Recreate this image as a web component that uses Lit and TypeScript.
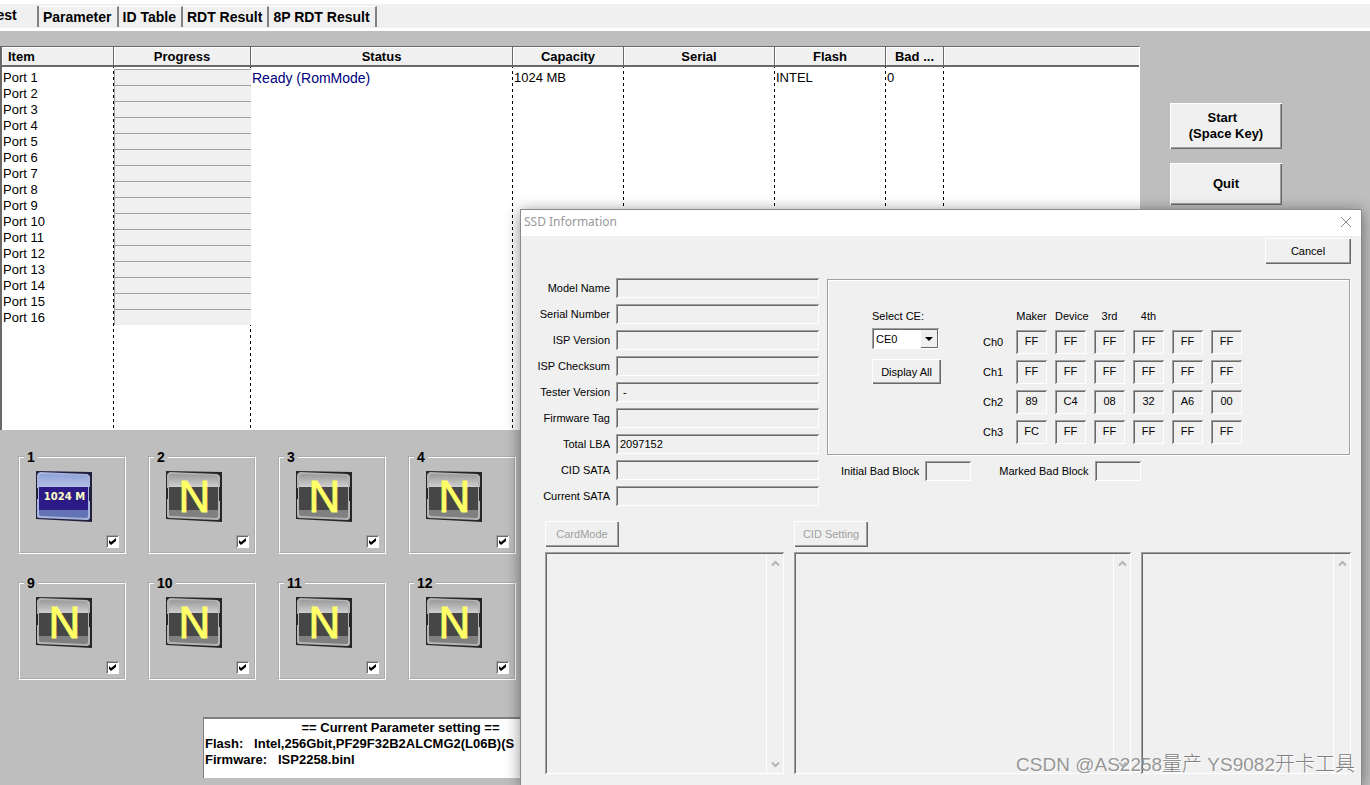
import { LitElement, html, css, svg } from "lit";
import { customElement, property } from "lit/decorators.js";

const TABS = ["Parameter", "ID Table", "RDT Result", "8P RDT Result"];

interface PortRow {
  item: string;
  status: string;
  capacity: string;
  flash: string;
  bad: string;
}

const PORTS: PortRow[] = Array.from({ length: 16 }, (_, i) => ({
  item: `Port ${i + 1}`,
  status: i === 0 ? "Ready (RomMode)" : "",
  capacity: i === 0 ? "1024 MB" : "",
  flash: i === 0 ? "INTEL" : "",
  bad: i === 0 ? "0" : "",
}));

const SLOTS = [
  { id: 1, text: "1024 M", ready: true },
  { id: 2, text: "N", ready: false },
  { id: 3, text: "N", ready: false },
  { id: 4, text: "N", ready: false },
  { id: 9, text: "N", ready: false },
  { id: 10, text: "N", ready: false },
  { id: 11, text: "N", ready: false },
  { id: 12, text: "N", ready: false },
];

const FIELDS: [string, string, string][] = [
  ["model", "Model Name", ""],
  ["serial", "Serial Number", ""],
  ["isp", "ISP Version", ""],
  ["checksum", "ISP Checksum", ""],
  ["tester", "Tester Version", " -"],
  ["tag", "Firmware Tag", ""],
  ["lba", "Total LBA", "2097152"],
  ["cid", "CID SATA", ""],
  ["current", "Current SATA", ""],
];

const CHANNELS: [string, string[]][] = [
  ["Ch0", ["FF", "FF", "FF", "FF", "FF", "FF"]],
  ["Ch1", ["FF", "FF", "FF", "FF", "FF", "FF"]],
  ["Ch2", ["89", "C4", "08", "32", "A6", "00"]],
  ["Ch3", ["FC", "FF", "FF", "FF", "FF", "FF"]],
];

@customElement("port-badge")
export class PortBadge extends LitElement {
  @property() text = "";
  @property({ type: Boolean }) ready = false;

  static styles = css`
    :host {
      display: grid;
      width: 57px;
      height: 52px;
      place-items: center;
      font-family: "Liberation Sans", Arial, sans-serif;
    }
    .art,
    .text {
      grid-area: 1 / 1;
    }
    .text {
      color: #ffff66;
      font-size: 44px;
      line-height: 50px;
      -webkit-text-stroke: 1px #ffff66;
    }
    .text.small {
      font: bold 10px/52px "DejaVu Sans", Verdana, sans-serif;
      color: #ffffc8;
      white-space: nowrap;
      -webkit-text-stroke: 0;
    }
  `;

  render() {
    const c = this.ready
      ? { edge: "#20203c", frame: "#a9b4dc", top1: "#8fa3da", top2: "#b4bfe4", band: "#2c1a86", low: "#6272b4" }
      : { edge: "#262626", frame: "#b4b4b4", top1: "#9a9a9a", top2: "#cfcfcf", band: "#464646", low: "#808080" };
    return html`
      <svg class="art" width="57" height="52" viewBox="0 0 57 52" aria-hidden="true">
        ${svg`
          <defs>
            <linearGradient id="shine" x1="0" y1="0" x2="0" y2="1">
              <stop offset="0" stop-color=${c.top1}/>
              <stop offset="1" stop-color=${c.top2}/>
            </linearGradient>
          </defs>
          <path d="M0 0 L56 1 V51 L0 48 Z" fill=${c.edge}/>
          <path d="M1 17 V45 Q1 47 3 47 L51 49 Q54 49 54 46 V6 Q54 4 51 3 L4 1 Q1 2 1 5 Z" fill=${c.frame}/>
          <path d="M3 16 V6 Q3 3 6 3 L49 4 Q52 5 52 8 V16 Z" fill="url(#shine)"/>
          <path d="M3 16 H52 V39 H3 Z" fill=${c.band}/>
          <path d="M3 39 H52 V45 Q52 47 50 47 L5 45 Q3 45 3 43 Z" fill=${c.low}/>
          <path d="M1 17 V28 M54 16 V30" stroke=${c.edge} stroke-width="2"/>
        `}
      </svg>
      <span class="text ${this.ready ? "small" : ""}">${this.text}</span>
    `;
  }
}

@customElement("app-root")
export class AppRoot extends LitElement {
  static styles = css`
    :host {
      display: block;
      position: relative;
      min-height: 100vh;
      overflow: hidden;
      background: #bebebe;
      color: #000;
      font-family: "Liberation Sans", Arial, sans-serif;
      font-size: 13px;
      line-height: 16px;
    }
    * {
      box-sizing: border-box;
    }
    button,
    input,
    select,
    textarea {
      font: inherit;
      color: inherit;
      margin: 0;
      padding: 0;
      border: 0;
      border-radius: 0;
      background: #f0f0f0;
      appearance: none;
    }
    .raised {
      box-shadow: inset 1px 1px #fff, inset -1px -1px #696969, inset -2px -2px #a0a0a0;
    }
    .sunken {
      box-shadow: inset 1px 1px #a0a0a0, inset -1px -1px #fff, inset 2px 2px #696969;
    }

    .tabs {
      display: flex;
      height: 31px;
      padding: 2px 0 0;
      border-top: 4px solid #fff;
      border-bottom: 3px solid #fff;
      background: #f0f0f0;
      margin-left: -12px;
    }
    .tab {
      height: 21px;
      padding: 0 5px 0 4px;
      border-right: 2px solid #808080;
      font-size: 14px;
      font-weight: bold;
      white-space: nowrap;
    }
    .tab:not(.active) {
      border-top: 1px solid #fff;
    }
    .tab.active {
      width: 51px;
      padding: 0 0 3px 1px;
      text-align: left;
    }

    .top {
      display: flex;
      padding-top: 15px;
    }
    .list {
      flex: 1;
      min-width: 0;
      background: #fff;
      border-left: 2px solid #696969;
      border-top: 1px solid #696969;
      border-right: 1px solid #fff;
    }
    .ports {
      width: 100%;
      table-layout: fixed;
      border-collapse: separate;
      border-spacing: 0;
    }
    .ports col {
      background: repeating-linear-gradient(#000 0 3px, #fff 3px 6px) right top / 1px 100% no-repeat;
    }
    .ports col.rest {
      background: none;
    }
    .c-item { width: 112px; }
    .c-progress { width: 137px; }
    .c-status { width: 262px; }
    .c-capacity { width: 111px; }
    .c-serial { width: 151px; }
    .c-flash { width: 111px; }
    .c-bad { width: 58px; }
    .ports th {
      height: 20px;
      padding: 2px 0 0;
      background: #f0f0f0;
      border-right: 1px solid #696969;
      border-bottom: 2px solid #696969;
      box-shadow: inset 1px 1px #fff;
      line-height: 16px;
    }
    .ports th:first-child {
      padding-left: 6px;
      text-align: left;
    }
    .ports th:last-child {
      border-right: 0;
    }
    .ports td {
      height: 16px;
      padding: 2px 1px 0;
      line-height: 14px;
      white-space: nowrap;
    }
    .ports .pad td {
      height: 2px;
      padding: 0;
    }
    .ports .fill td {
      height: 105px;
    }
    .ports .progress {
      background: #f0f0f0;
      border-top: 1px solid #a0a0a0;
      border-left: 1px solid #a0a0a0;
    }
    .ports .status {
      color: #000080;
      font-size: 14px;
    }
    .side {
      display: flex;
      flex-direction: column;
      gap: 14px;
      width: 230px;
      padding: 57px 0 0 30px;
    }
    .action {
      width: 112px;
      height: 46px;
      font-weight: bold;
    }
    .action.short {
      height: 42px;
    }

    .slots {
      display: grid;
      grid-template-columns: repeat(4, 108px);
      gap: 21px 22px;
      padding: 19px 0 0 18px;
    }
    .slot {
      display: flex;
      flex-direction: column;
      gap: 12px;
      height: 105px;
      min-width: 0;
      margin: 0;
      padding: 6px 5px 0 16px;
      border: 2px groove #fff;
    }
    .slot legend {
      margin-left: -12px;
      padding: 0 3px;
      font-size: 14px;
      font-weight: bold;
    }
    .tick {
      align-self: flex-end;
      display: grid;
    }
    .tick input {
      grid-area: 1 / 1;
      width: 13px;
      height: 13px;
      background: #fff;
    }
    .tick svg {
      grid-area: 1 / 1;
      z-index: 1;
      pointer-events: none;
      visibility: hidden;
    }
    .tick input:checked + svg {
      visibility: visible;
    }

    .params {
      width: 394px;
      height: 61px;
      margin: 37px 0 0 203px;
      padding: 1px 1px 0;
      background: #fff;
      border-top: 2px solid #808080;
      border-left: 1px solid #808080;
      font-weight: bold;
    }
    .params p {
      margin: 0;
      white-space: pre;
    }
    .params .head {
      text-align: center;
    }

    .dialog {
      position: absolute;
      left: 520px;
      right: 8px;
      top: 209px;
      bottom: 0;
      background: #f0f0f0;
      border: 1px solid #8a8a8a;
      border-bottom: 0;
      box-shadow: 0 2px 14px rgba(0, 0, 0, 0.45);
      font-size: 11px;
      line-height: 14px;
    }
    .titlebar {
      display: flex;
      align-items: center;
      justify-content: space-between;
      height: 26px;
      padding: 0 9px 2px 3px;
      background: #fff;
      color: #999;
      font: 12px/16px "Noto Sans", sans-serif;
    }
    .close {
      width: 12px;
      height: 12px;
      background: none;
      line-height: 0;
    }
    .cancel-row {
      display: flex;
      justify-content: flex-end;
      padding: 2px 10px 0 0;
    }
    .cancel {
      width: 86px;
      height: 26px;
    }
    .info {
      display: flex;
      gap: 8px;
      padding: 14px 11px 0 0;
    }
    .fields {
      display: grid;
      grid-template-columns: 89px 203px;
      gap: 6px;
      grid-auto-rows: 20px;
      align-items: center;
    }
    .fields label {
      text-align: right;
      white-space: nowrap;
    }
    .fields input {
      height: 20px;
      padding: 0 4px;
    }
    .right {
      flex: 1;
      min-width: 0;
    }
    .group {
      display: flex;
      height: 176px;
      margin-top: 1px;
      border: 1px solid #a0a0a0;
      box-shadow: inset 1px 1px #fff, 1px 1px #fff;
      padding-left: 44px;
    }
    .ce {
      display: flex;
      flex-direction: column;
      align-items: flex-start;
      width: 103px;
      padding-top: 29px;
    }
    .pick {
      display: grid;
      margin: 5px 0 10px;
    }
    .pick select {
      grid-area: 1 / 1;
      width: 67px;
      height: 21px;
      padding: 0 20px 0 4px;
      background: #fff;
    }
    .pick svg {
      grid-area: 1 / 1;
      place-self: center end;
      margin-right: 1px;
      pointer-events: none;
    }
    .display {
      width: 69px;
      height: 25px;
    }
    .ids {
      table-layout: fixed;
      width: 267px;
      border-collapse: separate;
      border-spacing: 8px 6px;
      margin-top: 22px;
      align-self: flex-start;
    }
    .ids col {
      width: 31px;
    }
    .ids col.name {
      width: 25px;
    }
    .ids th {
      height: 16px;
      padding: 0;
      font-weight: normal;
      text-align: center;
      white-space: nowrap;
    }
    .ids tbody th {
      text-align: left;
    }
    .ids td {
      height: 24px;
      padding: 0 0 3px;
      text-align: center;
    }
    .bad {
      display: flex;
      gap: 28px;
      padding: 6px 0 0 14px;
    }
    .bad label {
      display: flex;
      align-items: center;
      gap: 6px;
      white-space: nowrap;
    }
    .bad input {
      width: 46px;
      height: 20px;
    }
    .panels {
      display: grid;
      grid-template-columns: 239fr 337fr 210fr;
      grid-template-rows: 26px 222px;
      gap: 5px 10px;
      padding: 15px 10px 0 24px;
    }
    .mode {
      width: 74px;
      height: 26px;
      color: #a0a0a0;
    }
    .log {
      display: flex;
      padding: 2px 1px 1px 2px;
    }
    .log textarea {
      flex: 1;
      min-width: 0;
      resize: none;
      overflow: hidden;
      background: transparent;
    }
    .bar {
      display: flex;
      flex-direction: column;
      justify-content: space-between;
      align-items: center;
      width: 17px;
      padding: 6px 0 5px;
      border-left: 1px solid #fff;
    }
    .watermark {
      position: absolute;
      right: 15px;
      bottom: 6px;
      color: #969696;
      font: 300 19px/28px "Liberation Sans", "Noto Sans CJK SC", sans-serif;
      text-shadow: 1px 1px #fff;
      white-space: nowrap;
      pointer-events: none;
    }
    .watermark span {
      color: #808080;
      font-size: 20px;
    }
  `;

  private slotBox(s: (typeof SLOTS)[number]) {
    return html`
      <fieldset class="slot">
        <legend>${s.id}</legend>
        <port-badge .text=${s.text} .ready=${s.ready}></port-badge>
        <span class="tick">
          <input class="sunken" type="checkbox" checked aria-label="Slot ${s.id}" />
          <svg width="13" height="13" viewBox="0 0 13 13" aria-hidden="true">
            <path d="M3 5 L5 7 L10 3 V6 L5 10 L3 8 Z" fill="#000" />
          </svg>
        </span>
      </fieldset>
    `;
  }

  private log(name: string) {
    return html`
      <div class="log sunken">
        <textarea readonly aria-label=${name}></textarea>
        <div class="bar" aria-hidden="true">
          <svg width="9" height="7" viewBox="0 0 9 7">
            <path d="M1 5.500 L4.500 2 L8 5.500" fill="none" stroke="#b4b4b4" stroke-width="2" />
          </svg>
          <svg width="9" height="7" viewBox="0 0 9 7">
            <path d="M1 1.500 L4.500 5 L8 1.500" fill="none" stroke="#b4b4b4" stroke-width="2" />
          </svg>
        </div>
      </div>
    `;
  }

  render() {
    return html`
      <nav class="tabs">
        <button class="tab active">Test</button>
        ${TABS.map((t) => html`<button class="tab">${t}</button>`)}
      </nav>

      <div class="top">
        <div class="list">
          <table class="ports">
            <colgroup>
              <col class="c-item" />
              <col class="c-progress" />
              <col class="c-status" />
              <col class="c-capacity" />
              <col class="c-serial" />
              <col class="c-flash" />
              <col class="c-bad" />
              <col class="rest" />
            </colgroup>
            <thead>
              <tr>
                <th>Item</th>
                <th>Progress</th>
                <th>Status</th>
                <th>Capacity</th>
                <th>Serial</th>
                <th>Flash</th>
                <th>Bad ...</th>
                <th></th>
              </tr>
            </thead>
            <tbody>
              <tr class="pad">${Array.from({ length: 8 }, () => html`<td></td>`)}</tr>
              ${PORTS.map(
                (p) => html`<tr>
                  <td>${p.item}</td>
                  <td class="progress"></td>
                  <td class="status">${p.status}</td>
                  <td>${p.capacity}</td>
                  <td></td>
                  <td>${p.flash}</td>
                  <td>${p.bad}</td>
                  <td></td>
                </tr>`
              )}
              <tr class="fill">${Array.from({ length: 8 }, () => html`<td></td>`)}</tr>
            </tbody>
          </table>
        </div>
        <aside class="side">
          <button class="action raised">Start&nbsp;&nbsp;<br />(Space Key)</button>
          <button class="action short raised">Quit</button>
        </aside>
      </div>

      <div class="slots">${SLOTS.map((s) => this.slotBox(s))}</div>

      <div class="params">
        <p class="head">== Current Parameter setting ==</p>
        <p>Flash:   Intel,256Gbit,PF29F32B2ALCMG2(L06B)(S</p>
        <p>Firmware:   ISP2258.binl</p>
      </div>

      <section class="dialog" role="dialog" aria-label="SSD Information">
        <header class="titlebar">
          <span>SSD Information</span>
          <button class="close" aria-label="Close">
            <svg width="12" height="12" viewBox="0 0 12 12">
              <path d="M1 1 L11 11 M11 1 L1 11" stroke="#8c8c8c" fill="none" />
            </svg>
          </button>
        </header>
        <div class="cancel-row"><button class="cancel raised">Cancel</button></div>
        <div class="info">
          <div class="fields">
            ${FIELDS.map(
              ([id, label, value]) => html`
                <label for=${id}>${label}</label>
                <input class="sunken" id=${id} readonly .value=${value} />
              `
            )}
          </div>
          <div class="right">
            <div class="group">
              <div class="ce">
                <label for="ce">Select CE:</label>
                <span class="pick">
                  <select id="ce" class="sunken">
                    <option>CE0</option>
                  </select>
                  <svg width="17" height="18" viewBox="0 0 17 18" aria-hidden="true">
                    <path d="M0 0 H17 V18 H0 Z" fill="#f0f0f0" />
                    <path d="M0 17.500 H16.500 V0" fill="none" stroke="#696969" />
                    <path d="M4 7 H12 L8 11 Z" fill="#000" />
                  </svg>
                </span>
                <button class="display raised">Display All</button>
              </div>
              <table class="ids">
                <colgroup>
                  <col class="name" />
                  <col span="6" />
                </colgroup>
                <thead>
                  <tr>
                    <th></th>
                    <th>Maker</th>
                    <th>Device</th>
                    <th>3rd</th>
                    <th>4th</th>
                    <th></th>
                    <th></th>
                  </tr>
                </thead>
                <tbody>
                  ${CHANNELS.map(
                    ([name, bytes]) => html`<tr>
                      <th scope="row">${name}</th>
                      ${bytes.map((b) => html`<td class="sunken">${b}</td>`)}
                    </tr>`
                  )}
                </tbody>
              </table>
            </div>
            <div class="bad">
              <label>Initial Bad Block <input class="sunken" readonly /></label>
              <label>Marked Bad Block <input class="sunken" readonly /></label>
            </div>
          </div>
        </div>
        <div class="panels">
          <button class="mode raised" disabled>CardMode</button>
          <button class="mode raised" disabled>CID Setting</button>
          <span></span>
          ${this.log("Card mode")} ${this.log("CID setting")} ${this.log("Details")}
        </div>
      </section>

      <div class="watermark">CSDN @AS2258<span>量产</span> YS9082<span>开卡工具</span></div>
    `;
  }
}
